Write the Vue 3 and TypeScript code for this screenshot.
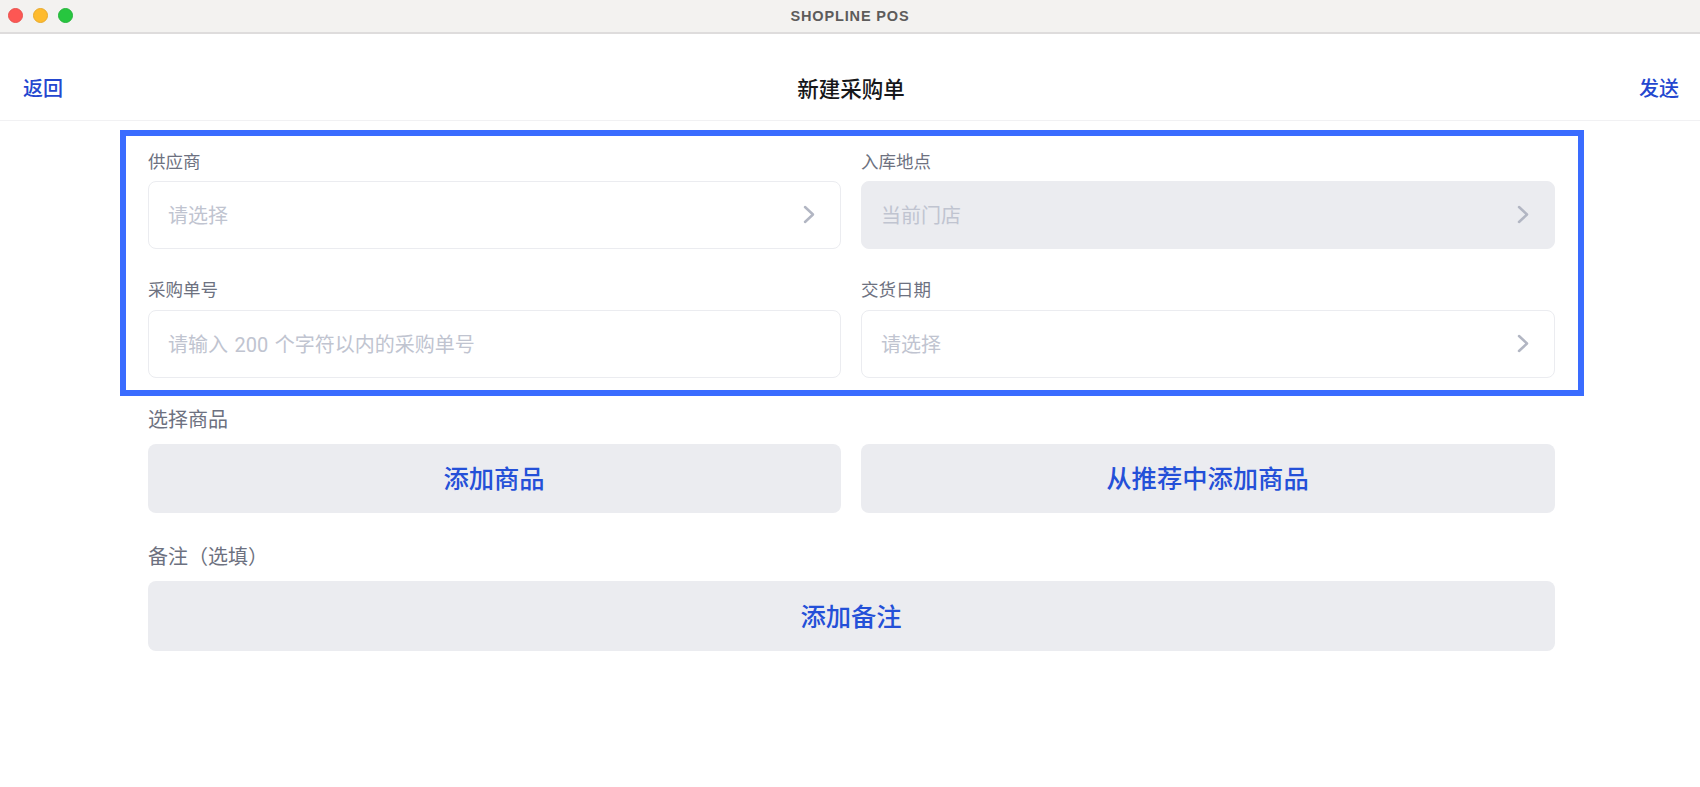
<script setup lang="ts">
interface Field {
  label: string
  placeholder: string
  arrow: boolean
  disabled?: boolean
}

const fields: Field[] = [
  { label: '供应商', placeholder: '请选择', arrow: true },
  { label: '入库地点', placeholder: '当前门店', arrow: true, disabled: true },
  { label: '采购单号', placeholder: '请输入 200 个字符以内的采购单号', arrow: false },
  { label: '交货日期', placeholder: '请选择', arrow: true },
]
</script>

<template>
  <div class="window">
    <div class="titlebar">
      <div class="lights">
        <span class="light red"></span>
        <span class="light yellow"></span>
        <span class="light green"></span>
      </div>
      <span class="app-name">SHOPLINE POS</span>
    </div>

    <header class="nav">
      <a class="nav-link">返回</a>
      <h1 class="nav-title">新建采购单</h1>
      <a class="nav-link">发送</a>
    </header>

    <main class="content">
      <section class="frame">
        <div v-for="f in fields" :key="f.label" class="field">
          <div class="field-label">{{ f.label }}</div>
          <div class="control" :class="{ disabled: f.disabled }">
            <span class="placeholder">{{ f.placeholder }}</span>
            <svg v-if="f.arrow" class="chevron" width="12" height="19" viewBox="0 0 12 19" fill="none">
              <path d="M2 2 L10 9.5 L2 17" stroke="#b2b6c3" stroke-width="2.5" stroke-linecap="round" stroke-linejoin="round" />
            </svg>
          </div>
        </div>
      </section>

      <section class="group first">
        <div class="group-label">选择商品</div>
        <div class="two">
          <button class="action">添加商品</button>
          <button class="action">从推荐中添加商品</button>
        </div>
      </section>

      <section class="group">
        <div class="group-label">备注（选填）</div>
        <button class="action">添加备注</button>
      </section>
    </main>
  </div>
</template>

<style>
html, body { margin: 0; background: #fff; }
</style>

<style scoped>
.window {
  width: 1700px;
  height: 787px;
  overflow: hidden;
  background: #fff;
  font-family: Inter, "Noto Sans CJK SC", sans-serif;
}
.titlebar {
  height: 32px;
  border-bottom: 2px solid #dedcdc;
  background: #f3f2f0;
  display: flex;
  align-items: center;
  justify-content: center;
  position: relative;
}
.lights {
  position: absolute;
  left: 7.5px;
  top: 7.5px;
  display: flex;
  gap: 10px;
}
.light {
  width: 15px;
  height: 15px;
  border-radius: 50%;
  box-sizing: border-box;
}
.red { background: #fd5753; border: 1px solid #e9524e; }
.yellow { background: #febb2e; border: 1px solid #e8aa2c; }
.green { background: #27c63f; border: 1px solid #25b53a; }
.app-name {
  font-family: "Liberation Sans", sans-serif;
  font-size: 14.5px;
  font-weight: 700;
  letter-spacing: 0.85px;
  color: #5d5c5b;
}
.nav {
  height: 62px;
  border-bottom: 1px solid #f1f1f3;
  display: flex;
  align-items: center;
  justify-content: space-between;
  padding: 24px 21px 0 23px;
}
.nav-link {
  font-size: 20px;
  font-weight: 500;
  line-height: 28px;
  color: #2447cf;
}
.nav-title {
  margin: 0;
  font-size: 21.5px;
  font-weight: 500;
  line-height: 30px;
  color: #16171a;
}
.content {
  padding: 9px 116px 0 120px;
}
.frame {
  border: 6px solid #3a6cff;
  padding: 13px 23px 12px 22px;
  display: grid;
  grid-template-columns: 693px 694px;
  column-gap: 20px;
  row-gap: 29px;
}
.field-label,
.group-label {
  line-height: 24px;
  color: #6d7180;
}
.field-label {
  font-size: 17.5px;
  margin-bottom: 8px;
}
.field:nth-child(-n + 2) .field-label {
  margin-top: 1px;
  margin-bottom: 7px;
}
.control {
  height: 68px;
  box-sizing: border-box;
  border: 1px solid #ebecf0;
  border-radius: 8px;
  padding: 0 10px 2px 19px;
  display: flex;
  align-items: center;
  justify-content: space-between;
}
.control.disabled {
  background: #ebecf0;
}
.placeholder {
  font-family: Roboto, "Noto Sans CJK SC", sans-serif;
  font-size: 20px;
  word-spacing: 1.5px;
  color: #c0c4d0;
}
.chevron {
  margin-right: 15px;
}
.group {
  padding-left: 28px;
  width: 1407px;
  margin-top: 30px;
}
.group.first {
  margin-top: 10px;
}
.group-label {
  font-size: 20px;
  line-height: 28px;
  margin-bottom: 10px;
}
.two {
  display: grid;
  grid-template-columns: 693px 694px;
  column-gap: 20px;
}
.action {
  height: 70px;
  width: 100%;
  border: 0;
  border-radius: 8px;
  background: #ebecf0;
  font-family: inherit;
  font-size: 25.3px;
  font-weight: 500;
  color: #2450d8;
  padding: 0 1px 3px 0;
  display: block;
}
.two .action {
  height: 69px;
}
</style>
